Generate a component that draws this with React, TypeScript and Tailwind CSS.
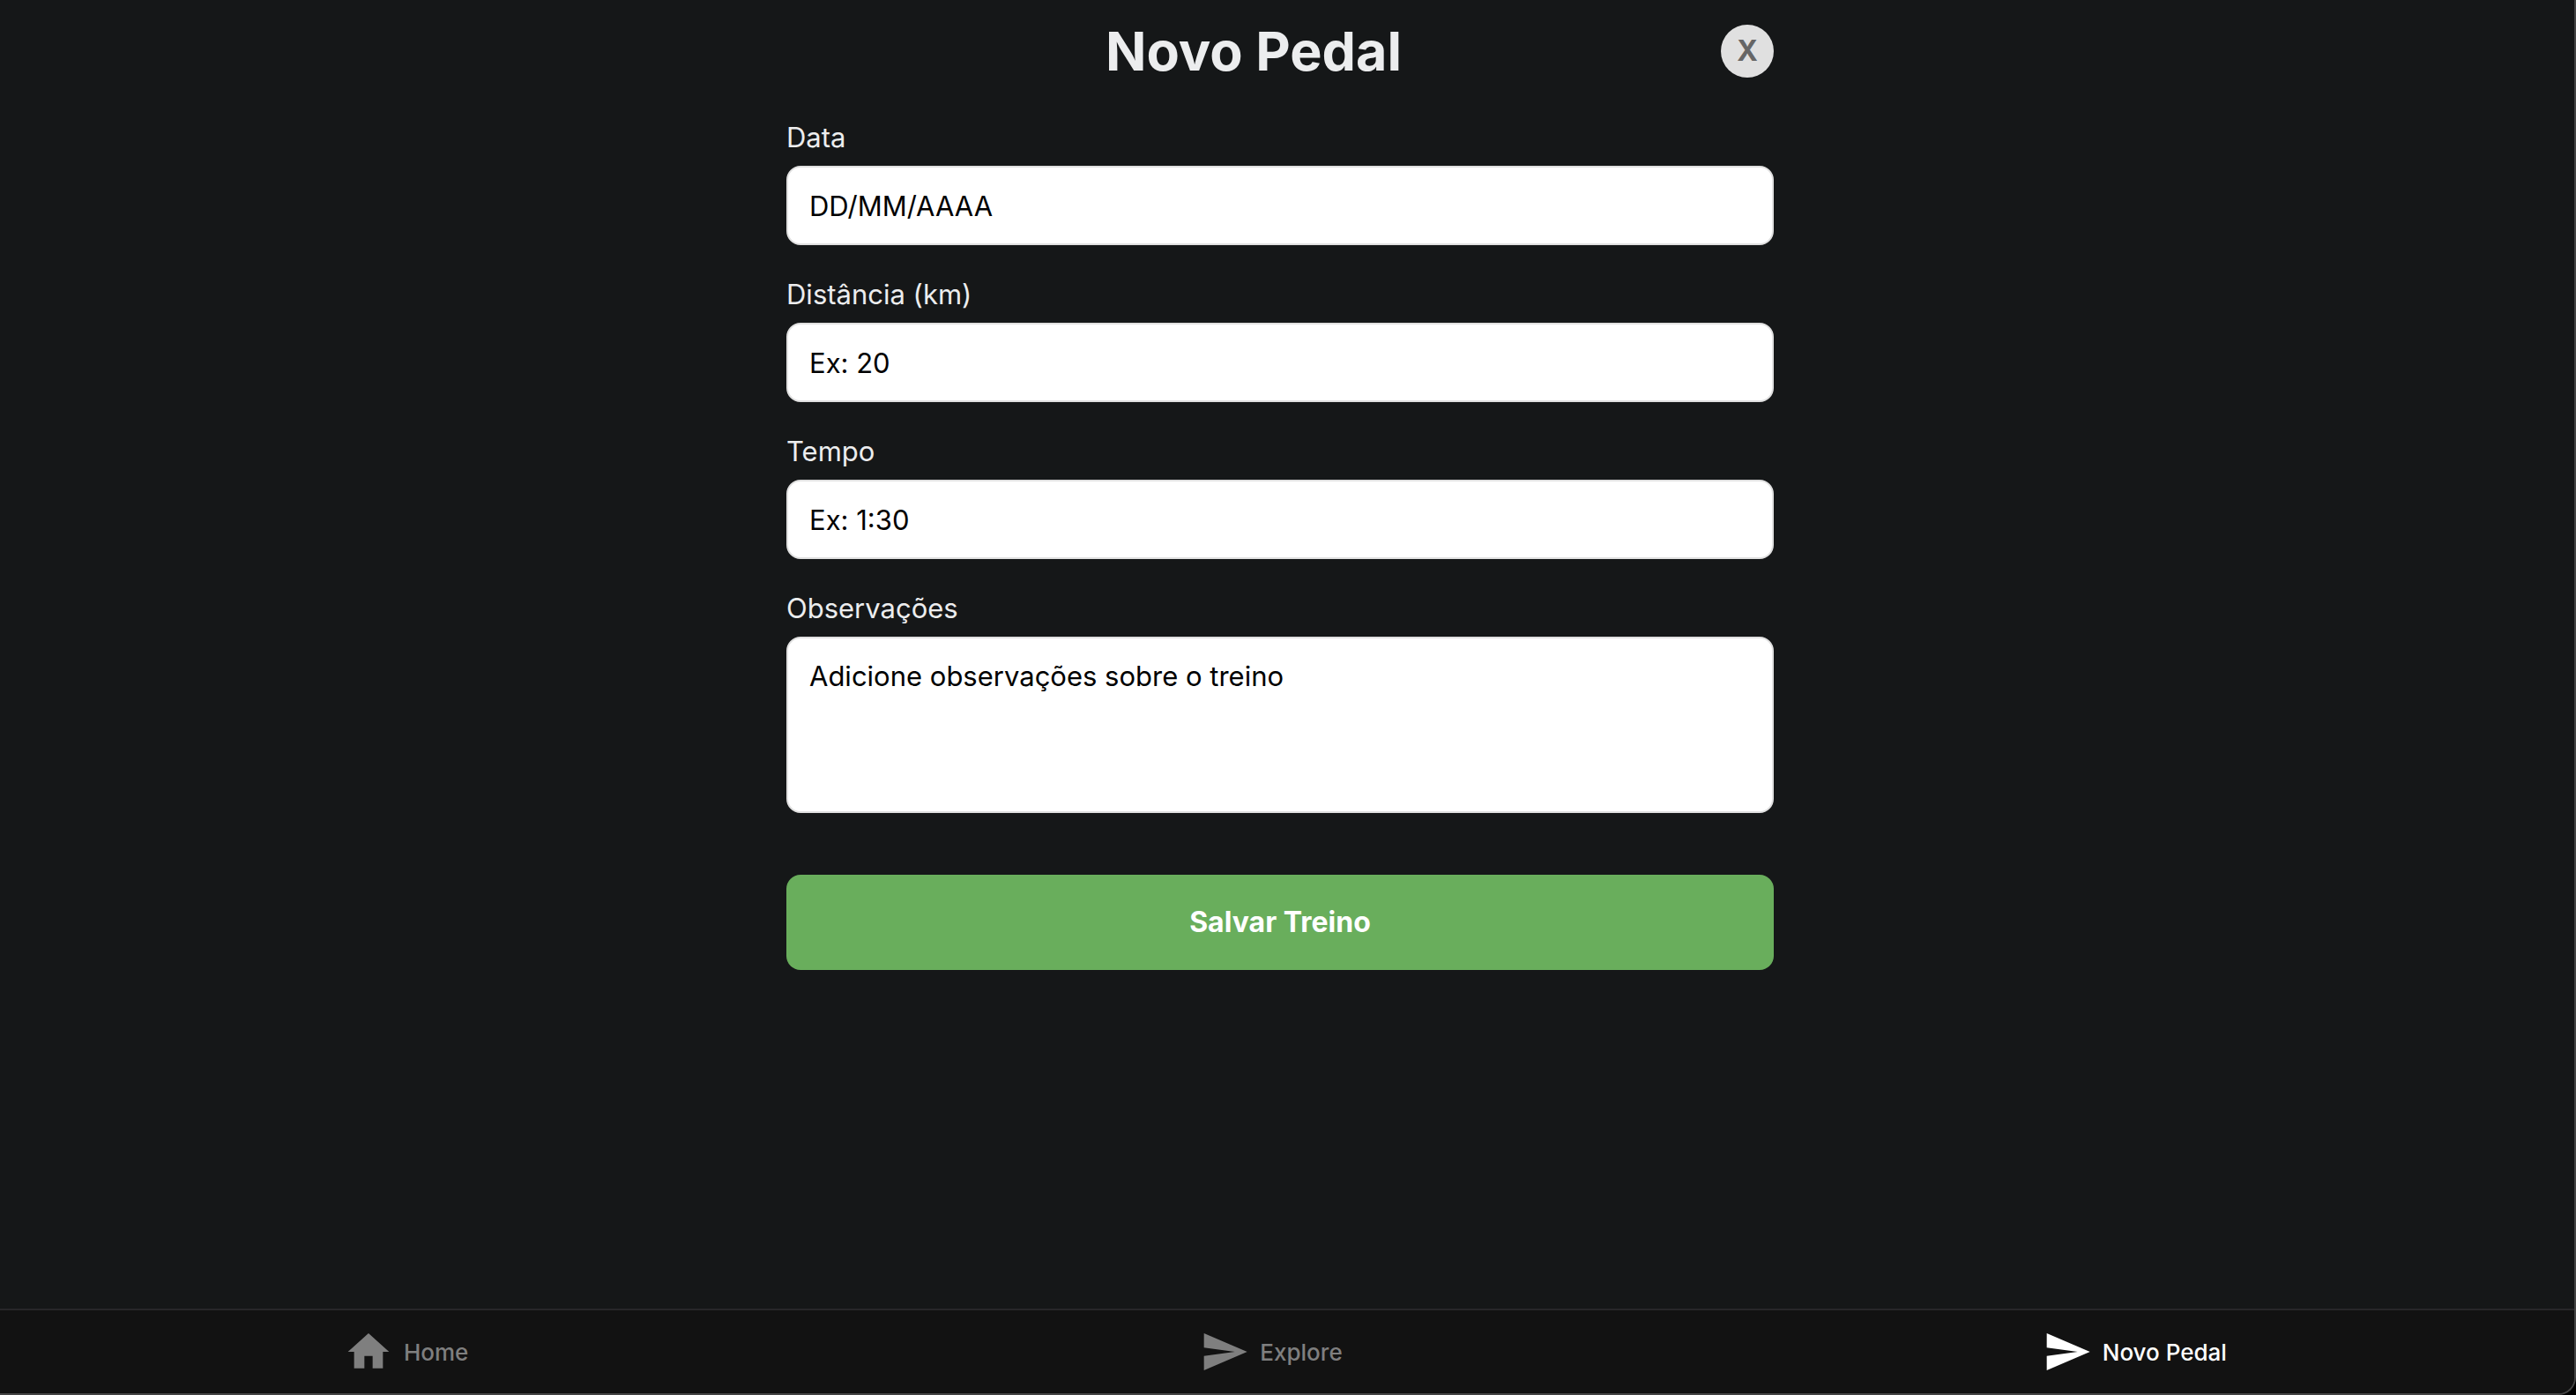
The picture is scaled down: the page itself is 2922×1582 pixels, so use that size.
import type { ReactNode } from "react";

const fieldClass =
  "block w-full rounded-2xl border-2 border-[#e0e0e0] bg-white px-6 text-[31px] text-black placeholder:text-black placeholder:opacity-100 focus:outline-none";

function Field({ id, label, children }: { id: string; label: string; children: ReactNode }) {
  return (
    <div className="mb-8">
      <label htmlFor={id} className="mb-2 block text-[31px] leading-[48px]">
        {label}
      </label>
      {children}
    </div>
  );
}

function HomeIcon() {
  return (
    <svg viewBox="0 0 24 24" className="size-14 shrink-0" fill="currentColor" aria-hidden="true">
      <path d="M10 20v-6h4v6h5v-8h3L12 3 2 12h3v8z" />
    </svg>
  );
}

function SendIcon() {
  return (
    <svg viewBox="0 0 24 24" className="size-14 shrink-0" fill="currentColor" aria-hidden="true">
      <path d="M2.01 21 23 12 2.01 3 2 10l15 2-15 2z" />
    </svg>
  );
}

export default function App() {
  return (
    <div className="flex min-h-screen flex-col bg-black font-['Inter',sans-serif] text-[#ecedee]">
      <div className="flex grow flex-col overflow-hidden rounded-br-[20px] border-r-2 border-b-2 border-[#444444] bg-[#151718]">
        <main className="grow pt-[26px] pr-4">
          <form className="mx-auto w-full max-w-[1120px]" onSubmit={(e) => e.preventDefault()}>
            <header className="mb-[42px] flex items-center">
              <h1 className="grow text-center text-[61px] leading-16 font-bold">Novo Pedal</h1>
              <button
                type="button"
                aria-label="Fechar"
                className="flex size-[60px] shrink-0 items-center justify-center rounded-full bg-[#e0e0e0] text-[32px] leading-none font-bold text-[#666666]"
              >
                X
              </button>
            </header>
            <Field id="data" label="Data">
              <input id="data" type="text" placeholder="DD/MM/AAAA" className={`${fieldClass} h-[90px]`} />
            </Field>
            <Field id="distancia" label="Distância (km)">
              <input id="distancia" type="text" placeholder="Ex: 20" className={`${fieldClass} h-[90px]`} />
            </Field>
            <Field id="tempo" label="Tempo">
              <input id="tempo" type="text" placeholder="Ex: 1:30" className={`${fieldClass} h-[90px]`} />
            </Field>
            <Field id="observacoes" label="Observações">
              <textarea
                id="observacoes"
                placeholder="Adicione observações sobre o treino"
                className={`${fieldClass} h-[200px] resize-none py-6 leading-[38px]`}
              />
            </Field>
            <button
              type="submit"
              className="mt-[70px] block h-[108px] w-full rounded-2xl bg-[#69ae5c] text-[32px] font-bold text-white"
            >
              Salvar Treino
            </button>
          </form>
        </main>
        <nav className="grid h-24 grid-cols-3 border-t-2 border-[#272729] bg-[#121212] text-[26px] font-medium text-[#7f7f7f]">
          <a href="#home" className="flex items-center justify-center gap-3 pr-13">
            <HomeIcon />
            Home
          </a>
          <a href="#explore" className="flex items-center justify-center gap-3 pr-9">
            <SendIcon />
            Explore
          </a>
          <a href="#novo-pedal" aria-current="page" className="flex items-center justify-center gap-3 pr-6 text-white">
            <SendIcon />
            Novo Pedal
          </a>
        </nav>
      </div>
    </div>
  );
}
